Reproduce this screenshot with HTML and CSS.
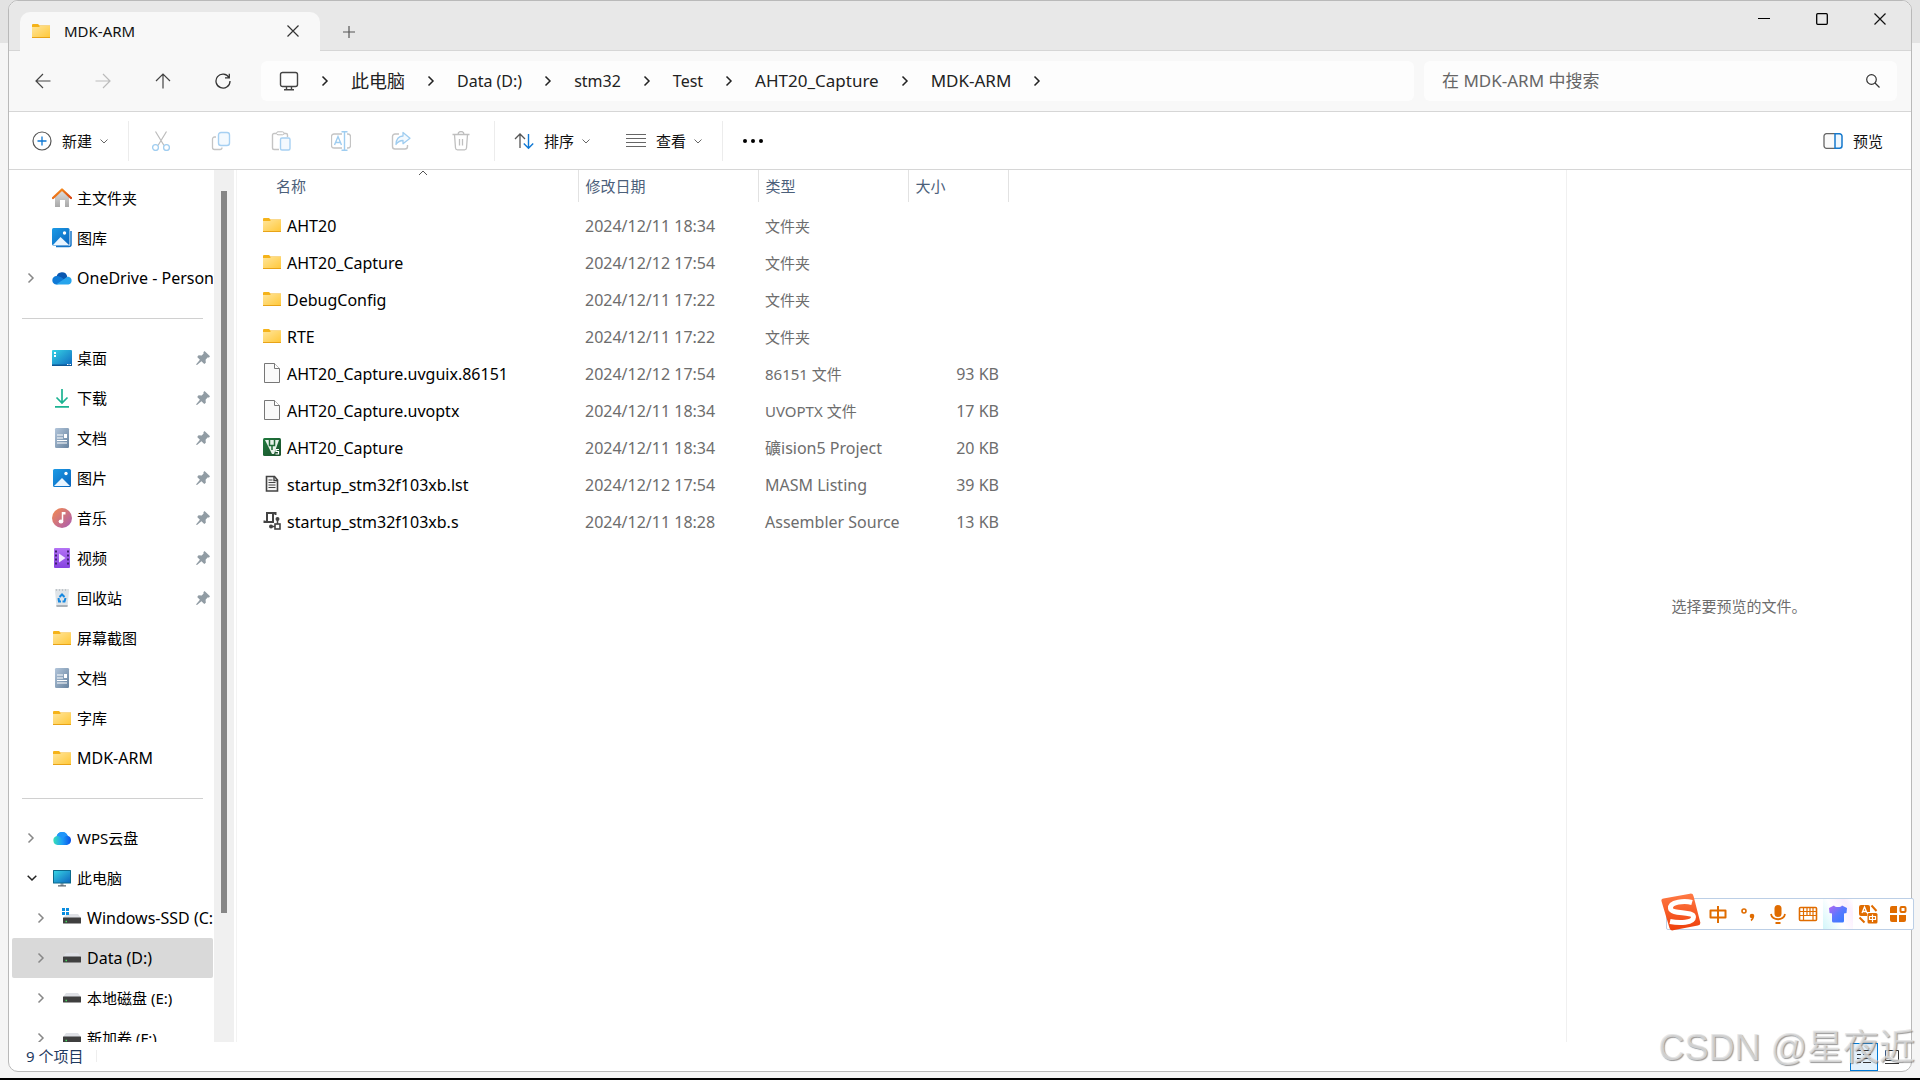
FILE: index.html
```html
<!DOCTYPE html>
<html lang="zh-CN">
<head>
<meta charset="utf-8">
<title>MDK-ARM</title>
<link rel="stylesheet" href="styles.css">
</head>
<body>
<svg class="sprite" width="0" height="0" aria-hidden="true">
  <defs>
    <linearGradient id="g-folder" x1="0" y1="0" x2="1" y2="1"><stop offset="0" stop-color="#ffe59a"/><stop offset="1" stop-color="#ffc83a"/></linearGradient>
    <linearGradient id="g-blue" x1="0" y1="0" x2="1" y2="1"><stop offset="0" stop-color="#1c9be6"/><stop offset="1" stop-color="#0a64bd"/></linearGradient>
    <linearGradient id="g-desk" x1="0" y1="0" x2="1" y2="1"><stop offset="0" stop-color="#36d3e4"/><stop offset="1" stop-color="#0f68c0"/></linearGradient>
    <linearGradient id="g-home" x1="0" y1="0" x2="0" y2="1"><stop offset="0" stop-color="#e0e0e0"/><stop offset="1" stop-color="#a8a8a8"/></linearGradient>
    <linearGradient id="g-roof" x1="0" y1="0" x2="1" y2="1"><stop offset="0" stop-color="#fb9a22"/><stop offset="1" stop-color="#d8430f"/></linearGradient>
    <linearGradient id="g-doc" x1="0" y1="0" x2="1" y2="1"><stop offset="0" stop-color="#b2c5da"/><stop offset="1" stop-color="#67839f"/></linearGradient>
    <linearGradient id="g-down" x1="0" y1="0" x2="1" y2="1"><stop offset="0" stop-color="#2fc98c"/><stop offset="1" stop-color="#0c9c9c"/></linearGradient>
    <linearGradient id="g-music" x1="0" y1="0" x2="1" y2="1"><stop offset="0" stop-color="#f58b4c"/><stop offset="1" stop-color="#a85bb5"/></linearGradient>
    <linearGradient id="g-video" x1="0" y1="0" x2="0" y2="1"><stop offset="0" stop-color="#b474f5"/><stop offset="1" stop-color="#8541e0"/></linearGradient>
    <linearGradient id="g-wps" x1="0" y1="0" x2="1" y2="0"><stop offset="0" stop-color="#36e0b8"/><stop offset=".5" stop-color="#1ea0f5"/><stop offset="1" stop-color="#0a50e8"/></linearGradient>
    <linearGradient id="g-sogou" x1="0" y1="0" x2="0" y2="1"><stop offset="0" stop-color="#ff7a45"/><stop offset="1" stop-color="#ee3f0a"/></linearGradient>
    <linearGradient id="g-shirt" x1="0" y1="0" x2="1" y2="1"><stop offset="0" stop-color="#b565f2"/><stop offset=".5" stop-color="#5a78ff"/><stop offset="1" stop-color="#2f79ff"/></linearGradient>
    <linearGradient id="g-keil" x1="0" y1="0" x2="1" y2="1"><stop offset="0" stop-color="#1f7a3d"/><stop offset="1" stop-color="#1b4f2c"/></linearGradient>
  </defs>
  <symbol id="folder" viewBox="0 0 18 18"><path d="M0 3a1 1 0 0 1 1-1h5l1.500 1.500H18V9H0z" fill="#f5b31a"/><path d="M0 5h7l1-1h10v11.500H0z" fill="url(#g-folder)"/><path d="M0 15h18v1H0z" fill="#e8a317"/></symbol>
  <symbol id="home" viewBox="0 0 20 20"><path d="M3 9l7-7 7 7v10h-4v-7H8v7H3z" fill="url(#g-home)"/><path d="M1 10l9-8.500 9 8.500" fill="none" stroke="url(#g-roof)" stroke-width="2.400" stroke-linecap="round" stroke-linejoin="round"/></symbol>
  <symbol id="gallery" viewBox="0 0 20 20"><path d="M4 18.500h13a2 2 0 0 0 2-2V3" fill="none" stroke="#1474c8" stroke-width="1.500"/><rect width="17.500" height="17.500" rx="1.500" fill="url(#g-blue)"/><path d="M1 17l7.500-8L17 17z" fill="#eaf5ff"/><circle cx="12.500" cy="5" r="1.700" fill="#fff"/></symbol>
  <symbol id="picture" viewBox="0 0 20 20"><rect x="1" y="1" width="18" height="18" rx="1.500" fill="url(#g-blue)"/><path d="M2 18l8-8 8 8z" fill="#eaf5ff"/><circle cx="14" cy="5.500" r="1.700" fill="#fff"/></symbol>
  <symbol id="onedrive" viewBox="0 0 20 20"><path d="M4.500 9a5.500 5.500 0 0 1 10.800-.5L13 13z" fill="#0a57b0"/><path d="M4.500 16.500A4.200 4.200 0 0 1 4.600 8c2-.3 4 .8 6 2.200l5 4z" fill="#0f7ad6"/><path d="M4 16.500l7.500-5c3-2 4-3 5.500-2.500a3.900 3.900 0 0 1-.5 7.500z" fill="#27a4ec"/></symbol>
  <symbol id="desktop" viewBox="0 0 20 20"><rect y="2" width="20" height="16" rx="1" fill="url(#g-desk)"/><path d="M2 4h2v2H2zM2 7h2v2H2z" fill="#fff"/><path d="M0 16.500h20V18H0z" fill="#0d5796"/><path d="M15 16.500h1.500M17.500 16.500H19" stroke="#fff"/></symbol>
  <symbol id="download" viewBox="0 0 20 20"><path d="M10 1v14M4.500 9.500L10 15l5.500-5.500M3 18.800h14" fill="none" stroke="#1cb392" stroke-width="1.700"/></symbol>
  <symbol id="document" viewBox="0 0 20 20"><rect x="3" width="14" height="20" rx="1.200" fill="url(#g-doc)"/><path d="M5 7h6M5 10h6M5 12.500h10M5 15h10" stroke="#fff" stroke-width="1.200"/><path d="M12 6h3v4h-3z" fill="#fff"/></symbol>
  <symbol id="music" viewBox="0 0 20 20"><circle cx="10" cy="10" r="10" fill="url(#g-music)"/><path d="M10.500 4v9" stroke="#fff" stroke-width="1.500"/><path d="M10 4h3.500v2.500H10z" fill="#fff"/><ellipse cx="9" cy="13.500" rx="2.400" ry="2" fill="#fff"/></symbol>
  <symbol id="video" viewBox="0 0 20 20"><rect x="2" width="16" height="20" rx="1" fill="url(#g-video)"/><path d="M4 2.500v16M16 2.500v16" stroke="#3e2070" stroke-width="2" stroke-dasharray="2 2"/><path d="M7 5.500v9l6.500-4.500z" fill="#f3eaff"/></symbol>
  <symbol id="bin" viewBox="0 0 20 20"><path d="M3 3h14l-1.500 16h-11z" fill="#dfe4e8"/><path d="M3.500 2h13" stroke="#a9b1b8" stroke-width="1.500" stroke-dasharray="2 1"/><path d="M4.300 17h11.400l-.3 2H4.600z" fill="#aab2b9"/><path d="M7.500 9L10 6.500 12.500 9M13.500 10l-1 3.500h-2M9 13.500H7L6.500 10" fill="none" stroke="#1688e0" stroke-width="2"/></symbol>
  <symbol id="wps" viewBox="0 0 20 20"><path d="M5.500 17a4.600 4.600 0 0 1-.8-9 5.800 5.800 0 0 1 11-.3A4.800 4.800 0 0 1 15 17z" fill="url(#g-wps)"/><path d="M4.700 8a5.800 5.800 0 0 1 11-.3c-3 0-4.500 2-5.500 4.300A5.500 5.500 0 0 0 4.700 8z" fill="#2196fa"/></symbol>
  <symbol id="pc" viewBox="0 0 20 20"><path d="M8.500 15h3v3h-3z" fill="#9aa5ad"/><path d="M6 17.200h8v1.300H6z" fill="#59646c"/><rect x="1" y="2" width="18" height="13.500" rx=".5" fill="#0c6a8c"/><rect x="2" y="3" width="16" height="11.500" fill="url(#g-desk)"/></symbol>
  <symbol id="drive" viewBox="0 0 18 18"><path d="M3 4h12l3 4H0z" fill="#dfe1e6"/><rect y="7.500" width="18" height="6" rx=".5" fill="#3f3f3f"/><path d="M2.500 11.500H4" stroke="#47e05f" stroke-width="1.500"/></symbol>
  <symbol id="windrive" viewBox="0 0 20 20"><path d="M5 6h11l3 4H1z" fill="#dfe1e6"/><rect x="1" y="9.500" width="18" height="6" rx=".5" fill="#3f3f3f"/><path d="M3.500 13.500H5" stroke="#47e05f" stroke-width="1.500"/><path d="M0 0h3v3H0zM4 0h3v3H4zM0 4h3v3H0zM4 4h3v3H4z" fill="#0a8de0"/></symbol>
  <symbol id="file" viewBox="0 0 18 20"><path d="M1.500.5h10l5 5v14h-15z" fill="#fafafa" stroke="#777"/><path d="M11.500.5v5h5" fill="#fff" stroke="#777"/></symbol>
  <symbol id="keil" viewBox="0 0 18 20"><rect y="1" width="18" height="18" rx="1.500" fill="url(#g-keil)"/><path d="M2 3h14l-5 14H9z" fill="#e8f2ea"/><path d="M6.500 3v5.500h5V3M9 9v4" fill="none" stroke="#1f6a37" stroke-width="1.500"/><path d="M16 12.500h-3v2h2.500V17H12.500" fill="none" stroke="#fff" stroke-width="1.200"/></symbol>
  <symbol id="listing" viewBox="0 0 18 20"><path d="M3.500 2.500h8l3 3.500v11h-11z" fill="#f6f6f6" stroke="#444" stroke-width="1.600"/><path d="M11 2v4.500h4" fill="none" stroke="#444" stroke-width="1.400"/><path d="M5.500 6h4M5.500 8.500h7M5.500 11h7M5.500 13.500h7" stroke="#444" stroke-width="1.200"/></symbol>
  <symbol id="asm" viewBox="0 0 18 20"><path d="M4 10V2h8.500v2M10 2.500V11H1.500V9.500" fill="none" stroke="#444" stroke-width="2"/><circle cx="14.500" cy="8" r="2" fill="#444"/><circle cx="8" cy="15.500" r="2" fill="#444"/><path d="M14.500 8v5M8 15.500h4" stroke="#444" stroke-width="1.500"/><rect x="12" y="13" width="5" height="5" fill="#fff" stroke="#444" stroke-width="1.600"/></symbol>
  <symbol id="pin" viewBox="0 0 14 14"><path d="M8.500 0L14 5.200 13 6.600l-1.500 0L9.600 8.700l.2 3L8.300 13 5.400 10.200 1 14l-1-.5L3.900 8.800 1.200 5.900l1.400-1.600 3.100.2 1.900-2-.2-1.200z" fill="#919ca4"/></symbol>
  <symbol id="right" viewBox="0 0 8 12"><path d="M1.500 1.500L6 6l-4.500 4.500" fill="none" stroke="currentColor" stroke-width="1.500"/></symbol>
  <symbol id="down" viewBox="0 0 8 8"><path d="M.5 2.500L4 6l3.500-3.500" fill="none" stroke="#666"/></symbol>
  <symbol id="close" viewBox="0 0 12 12"><path d="M.5.5l11 11M11.500.5l-11 11" stroke="currentColor" stroke-width="1.200"/></symbol>
</svg>

<div class="desktop">
  <main class="window">
    <header class="tabs">
      <div class="tab">
        <svg class="i18"><use href="#folder"/></svg>
        <span class="tab-title">MDK-ARM</span>
        <button class="tab-close" aria-label="关闭标签页"><svg class="i12"><use href="#close"/></svg></button>
      </div>
      <button class="tab-new" aria-label="新建标签页"><svg class="i12" viewBox="0 0 12 12"><path d="M6 0v12M0 6h12" stroke="#555" stroke-width="1.200"/></svg></button>
      <div class="caption">
        <button aria-label="最小化"><svg class="i12" viewBox="0 0 12 12"><path d="M0 5.500h12" stroke="#000"/></svg></button>
        <button aria-label="最大化"><svg class="i12" viewBox="0 0 12 12"><rect x=".7" y=".7" width="10.600" height="10.600" rx="1" fill="none" stroke="#000" stroke-width="1.300"/></svg></button>
        <button aria-label="关闭"><svg class="i12"><use href="#close"/></svg></button>
      </div>
    </header>

    <nav class="address" aria-label="地址栏">
      <div class="history">
        <button aria-label="后退"><svg class="i16" viewBox="0 0 16 16"><path d="M15.500 8H1M8 1L1 8l7 7" fill="none" stroke="#444" stroke-width="1.200"/></svg></button>
        <button aria-label="前进" disabled><svg class="i16" viewBox="0 0 16 16"><path d="M.5 8H15M8 1l7 7-7 7" fill="none" stroke="#bbb" stroke-width="1.200"/></svg></button>
        <button aria-label="上移"><svg class="i16" viewBox="0 0 16 16"><path d="M8 15.500V1M1 8l7-7 7 7" fill="none" stroke="#444" stroke-width="1.200"/></svg></button>
        <button aria-label="刷新"><svg class="i16" viewBox="0 0 16 16"><path d="M14 4.500A7 7 0 1 0 15 8M14.300.8v4H10" fill="none" stroke="#333" stroke-width="1.300"/></svg></button>
      </div>
      <div class="crumbs">
        <svg class="i20" viewBox="0 0 20 20"><rect x="1.500" y="1.500" width="17" height="14" rx="2" fill="none" stroke="#444" stroke-width="1.400"/><path d="M7.500 16v2.500M12.500 16v2.500M5 18.800h10" stroke="#444" stroke-width="1.400"/></svg>
        <svg class="chev"><use href="#right"/></svg>
        <button class="zh-large">此电脑</button>
        <svg class="chev"><use href="#right"/></svg>
        <button>Data (D:)</button>
        <svg class="chev"><use href="#right"/></svg>
        <button>stm32</button>
        <svg class="chev"><use href="#right"/></svg>
        <button>Test</button>
        <svg class="chev"><use href="#right"/></svg>
        <button class="caps">AHT20_Capture</button>
        <svg class="chev"><use href="#right"/></svg>
        <button class="caps">MDK-ARM</button>
        <svg class="chev"><use href="#right"/></svg>
      </div>
      <label class="search">
        <input type="text" placeholder="在 MDK-ARM 中搜索" aria-label="在 MDK-ARM 中搜索">
        <svg class="i14" viewBox="0 0 14 14"><circle cx="5.500" cy="5.500" r="4.800" fill="none" stroke="#333" stroke-width="1.200"/><path d="M9 9l4.500 4.500" stroke="#333" stroke-width="1.300"/></svg>
      </label>
    </nav>

    <div class="toolbar">
      <button class="tool new"><svg class="i20" viewBox="0 0 20 20"><circle cx="10" cy="10" r="9" fill="none" stroke="#555" stroke-width="1.200"/><path d="M10 5.500v9M5.500 10h9" stroke="#0f78d4" stroke-width="1.300"/></svg><span>新建</span><svg class="i8"><use href="#down"/></svg></button>
      <div class="actions">
        <button disabled aria-label="剪切"><svg class="i20" viewBox="0 0 20 20"><path d="M4.500.5L13 14.500M15.500.5L7 14.500" stroke="#bcbcbc" stroke-width="1.200"/><g fill="none" stroke="#9fcdf0" stroke-width="1.300"><circle cx="4.500" cy="16.500" r="2.900"/><circle cx="15.500" cy="16.500" r="2.900"/></g></svg></button>
        <button disabled aria-label="复制"><svg class="i20" viewBox="0 0 20 20"><path d="M5 6H3.500a2 2 0 0 0-2 2v8.500a2 2 0 0 0 2 2H9a2 2 0 0 0 2-2" fill="none" stroke="#c4c4c4" stroke-width="1.300"/><rect x="7.500" y="1.500" width="11" height="13" rx="2.500" fill="#f3f9fe" stroke="#a6d0f2" stroke-width="1.400"/></svg></button>
        <button disabled aria-label="粘贴"><svg class="i20" viewBox="0 0 20 20"><path d="M5 2.500H3a1.500 1.500 0 0 0-1.500 1.500v13A1.500 1.500 0 0 0 3 18.500h5M13 2.500h2A1.500 1.500 0 0 1 16.500 4v2" fill="none" stroke="#c4c4c4" stroke-width="1.400"/><rect x="5.500" y=".8" width="7.500" height="3" rx="1.500" fill="#fff" stroke="#bbb"/><rect x="9.500" y="7" width="9.500" height="12" rx="1.500" fill="#f3f9fe" stroke="#a6d0f2" stroke-width="1.400"/></svg></button>
        <button disabled aria-label="重命名"><svg class="i20" viewBox="0 0 20 20"><path d="M11 3H3a2.500 2.500 0 0 0-2.500 2.500v9A2.500 2.500 0 0 0 3 17h8M16 3h1a2.500 2.500 0 0 1 2.500 2.500v9A2.500 2.500 0 0 1 17 17h-1" fill="none" stroke="#c4c4c4" stroke-width="1.300"/><path d="M3.500 14L7 5.500l3.500 8.500M5 11.500h4M13.500 1v18M10.500.7h6M10.500 19.300h6" fill="none" stroke="#9fcdf0" stroke-width="1.400"/></svg></button>
        <button disabled aria-label="共享"><svg class="i20" viewBox="0 0 20 20"><path d="M8 3H4a2.500 2.500 0 0 0-2.500 2.500v10A2.500 2.500 0 0 0 4 18h10a2.500 2.500 0 0 0 2.500-2.500V14" fill="none" stroke="#c4c4c4" stroke-width="1.400"/><path d="M12 1.500l7 5.700-7 5.500V9.500c-3 0-5 1-7 4 .2-5 2.500-8.300 7-8.500z" fill="#f3f9fe" stroke="#9fcdf0" stroke-width="1.300" stroke-linejoin="round"/></svg></button>
        <button disabled aria-label="删除"><svg class="i20" viewBox="0 0 20 20"><path d="M1.500 3.500h17M7 3.500a3 3 0 0 1 6 0M3.500 3.500l1 13.500a2 2 0 0 0 2 1.800h7a2 2 0 0 0 2-1.800l1-13.500M8.500 8v6.500M11.500 8v6.500" fill="none" stroke="#bfbfbf" stroke-width="1.300"/></svg></button>
      </div>
      <button class="tool sort"><svg class="i20" viewBox="0 0 20 20"><path d="M6 17V3M1 8l5-5 5 5" fill="none" stroke="#555" stroke-width="1.300"/><path d="M14.500 3v14M9.800 12.500l4.700 4.700 4.700-4.700" fill="none" stroke="#0f78d4" stroke-width="1.400"/></svg><span>排序</span><svg class="i8"><use href="#down"/></svg></button>
      <button class="tool view"><svg class="i20" viewBox="0 0 20 20"><path d="M0 3.500h20M0 7.500h20M0 11.500h20M0 15.500h20" stroke="#666"/></svg><span>查看</span><svg class="i8"><use href="#down"/></svg></button>
      <button class="tool more" aria-label="更多"><svg class="i20" viewBox="0 0 20 20"><circle cx="2" cy="10" r="2"/><circle cx="10" cy="10" r="2"/><circle cx="18" cy="10" r="2"/></svg></button>
      <button class="tool preview-toggle"><svg class="i20" viewBox="0 0 20 20"><path d="M12 2.700H3.500A2.500 2.500 0 0 0 1 5.200v9.600a2.500 2.500 0 0 0 2.500 2.500H12" fill="#fafafa" stroke="#666" stroke-width="1.300"/><path d="M12 2.700h4.500A2.500 2.500 0 0 1 19 5.200v9.600a2.500 2.500 0 0 1-2.500 2.500H12z" fill="#eef7fe" stroke="#1478cc" stroke-width="1.500"/></svg><span>预览</span></button>
    </div>

    <div class="content">
      <nav class="sidebar" aria-label="导航窗格">
        <a href="#" class="row"><i></i><svg class="i20"><use href="#home"/></svg><span>主文件夹</span></a>
        <a href="#" class="row"><i></i><svg class="i20"><use href="#gallery"/></svg><span>图库</span></a>
        <a href="#" class="row latin"><i><svg class="chev"><use href="#right"/></svg></i><svg class="i20"><use href="#onedrive"/></svg><span>OneDrive - Personal</span></a>
        <hr>
        <a href="#" class="row"><i></i><svg class="i20"><use href="#desktop"/></svg><span>桌面</span><svg class="pin"><use href="#pin"/></svg></a>
        <a href="#" class="row"><i></i><svg class="i20"><use href="#download"/></svg><span>下载</span><svg class="pin"><use href="#pin"/></svg></a>
        <a href="#" class="row"><i></i><svg class="i20"><use href="#document"/></svg><span>文档</span><svg class="pin"><use href="#pin"/></svg></a>
        <a href="#" class="row"><i></i><svg class="i20"><use href="#picture"/></svg><span>图片</span><svg class="pin"><use href="#pin"/></svg></a>
        <a href="#" class="row"><i></i><svg class="i20"><use href="#music"/></svg><span>音乐</span><svg class="pin"><use href="#pin"/></svg></a>
        <a href="#" class="row"><i></i><svg class="i20"><use href="#video"/></svg><span>视频</span><svg class="pin"><use href="#pin"/></svg></a>
        <a href="#" class="row"><i></i><svg class="i20"><use href="#bin"/></svg><span>回收站</span><svg class="pin"><use href="#pin"/></svg></a>
        <a href="#" class="row"><i></i><svg class="i20 inset"><use href="#folder"/></svg><span>屏幕截图</span></a>
        <a href="#" class="row"><i></i><svg class="i20"><use href="#document"/></svg><span>文档</span></a>
        <a href="#" class="row"><i></i><svg class="i20 inset"><use href="#folder"/></svg><span>字库</span></a>
        <a href="#" class="row latin"><i></i><svg class="i20 inset"><use href="#folder"/></svg><span>MDK-ARM</span></a>
        <hr>
        <a href="#" class="row"><i><svg class="chev"><use href="#right"/></svg></i><svg class="i20"><use href="#wps"/></svg><span>WPS云盘</span></a>
        <a href="#" class="row"><i><svg class="open" viewBox="0 0 10 8"><path d="M.7 1.700L5 6l4.300-4.300" fill="none" stroke="#222" stroke-width="1.500"/></svg></i><svg class="i20"><use href="#pc"/></svg><span>此电脑</span></a>
        <a href="#" class="row child latin"><i><svg class="chev"><use href="#right"/></svg></i><svg class="i20"><use href="#windrive"/></svg><span>Windows-SSD (C:)</span></a>
        <a href="#" class="row child latin selected"><i><svg class="chev"><use href="#right"/></svg></i><svg class="i20 inset"><use href="#drive"/></svg><span>Data (D:)</span></a>
        <a href="#" class="row child"><i><svg class="chev"><use href="#right"/></svg></i><svg class="i20 inset"><use href="#drive"/></svg><span>本地磁盘 (E:)</span></a>
        <a href="#" class="row child"><i><svg class="chev"><use href="#right"/></svg></i><svg class="i20 inset"><use href="#drive"/></svg><span>新加卷 (F:)</span></a>
      </nav>
      <div class="scrollbar"><div class="thumb"></div></div>

      <section class="files">
        <table>
          <colgroup><col class="c-name"><col class="c-date"><col class="c-type"><col class="c-size"></colgroup>
          <thead><tr><th class="sorted">名称<svg class="caret" viewBox="0 0 10 6"><path d="M1 5l4-4 4 4" fill="none" stroke="#555"/></svg></th><th>修改日期</th><th>类型</th><th>大小</th></tr></thead>
          <tbody>
            <tr><td><svg><use href="#folder"/></svg>AHT20</td><td>2024/12/11 18:34</td><td class="zh">文件夹</td><td></td></tr>
            <tr><td><svg><use href="#folder"/></svg>AHT20_Capture</td><td>2024/12/12 17:54</td><td class="zh">文件夹</td><td></td></tr>
            <tr><td><svg><use href="#folder"/></svg>DebugConfig</td><td>2024/12/11 17:22</td><td class="zh">文件夹</td><td></td></tr>
            <tr><td><svg><use href="#folder"/></svg>RTE</td><td>2024/12/11 17:22</td><td class="zh">文件夹</td><td></td></tr>
            <tr><td><svg><use href="#file"/></svg>AHT20_Capture.uvguix.86151</td><td>2024/12/12 17:54</td><td class="zh">86151 文件</td><td>93 KB</td></tr>
            <tr><td><svg><use href="#file"/></svg>AHT20_Capture.uvoptx</td><td>2024/12/11 18:34</td><td class="zh">UVOPTX 文件</td><td>17 KB</td></tr>
            <tr><td><svg><use href="#keil"/></svg>AHT20_Capture</td><td>2024/12/11 18:34</td><td>礦ision5 Project</td><td>20 KB</td></tr>
            <tr><td><svg><use href="#listing"/></svg>startup_stm32f103xb.lst</td><td>2024/12/12 17:54</td><td>MASM Listing</td><td>39 KB</td></tr>
            <tr><td><svg><use href="#asm"/></svg>startup_stm32f103xb.s</td><td>2024/12/11 18:28</td><td>Assembler Source</td><td>13 KB</td></tr>
          </tbody>
        </table>
      </section>

      <aside class="preview">选择要预览的文件。</aside>
    </div>

    <footer class="status">
      <span class="count">9 个项目</span>
      <button class="mode active" aria-label="详细信息"><svg viewBox="0 0 16 16"><path d="M1 1.500h4M7 1.500h8M1 5.500h4M7 5.500h8M1 9.500h4M7 9.500h8M1 13.500h4M7 13.500h8" stroke="#333"/></svg></button>
      <button class="mode" aria-label="大图标"><svg viewBox="0 0 16 16"><path d="M1.500 1.500h13v10h-13zM1 14.500h14" fill="none" stroke="#333"/></svg></button>
    </footer>
  </main>

  <div class="ime">
    <svg class="ime-logo" viewBox="0 0 40 38"><path d="M2.500 5.500L29 .7a3 3 0 0 1 3.500 2.200l6.700 26a3 3 0 0 1-2.400 3.700L12 37.300a3 3 0 0 1-3.500-2.200L.6 8.500a2.300 2.300 0 0 1 1.900-3z" fill="url(#g-sogou)"/><path d="M31 9.500C24 7.500 8.500 8.500 9.500 15.500c.8 6 23 2.500 23 8.500 0 6-14 6.500-23.500 4.500" fill="none" stroke="#fff" stroke-width="5"/></svg>
    <button aria-label="中文"><svg viewBox="0 0 20 20"><path d="M10 2v17M2.500 6.500h15v7h-15z" fill="none" stroke="currentColor" stroke-width="2" stroke-linejoin="round"/></svg></button>
    <button aria-label="标点"><svg viewBox="0 0 20 20"><circle cx="6" cy="7" r="2" fill="none" stroke="currentColor" stroke-width="1.600"/><circle cx="14" cy="12" r="2.300" fill="currentColor"/><path d="M15.300 12c0 2-.8 3.500-2.300 4.500" fill="none" stroke="currentColor" stroke-width="1.600"/></svg></button>
    <button aria-label="语音"><svg viewBox="0 0 20 20"><rect x="6.500" y="1" width="7" height="12" rx="3.500" fill="currentColor"/><path d="M3 10c1 7 13 7 14 0M7.500 19h5" fill="none" stroke="currentColor" stroke-width="1.800"/></svg></button>
    <button aria-label="键盘"><svg viewBox="0 0 20 20"><rect x="1.500" y="3.500" width="17" height="13" rx="1" fill="none" stroke="currentColor" stroke-width="1.600"/><path d="M2 7.500h16M2 11.500h16M5.500 4v12M9 4v8M12 4v8M15 4v12" stroke="currentColor" stroke-width="1.200"/></svg></button>
    <button class="skin" aria-label="皮肤"><svg viewBox="0 0 20 20"><path d="M1 4l5-2.500c1 2 7 2 8 0L19 4l-.5 5-2.500.5V17a1.500 1.500 0 0 1-1.500 1.500h-9A1.500 1.500 0 0 1 4 17V9.500L1.500 9z" fill="url(#g-shirt)"/></svg></button>
    <button aria-label="翻译"><svg viewBox="0 0 20 20"><path d="M3 1h7a2 2 0 0 1 2 2v5H9v4H3a2 2 0 0 1-2-2V3a2 2 0 0 1 2-2z" fill="currentColor"/><path d="M4 9l2.500-6L9 9M5 7.500h3" fill="none" stroke="#fff" stroke-width="1.300"/><path d="M13.500 1.500L18.500 7M1.500 13.500l5 5" stroke="currentColor" stroke-width="2"/><rect x="9.500" y="9" width="10" height="10.500" rx="1.500" fill="currentColor"/><path d="M14.500 10.500v7.500M11.500 12.500h6v3h-6z" fill="none" stroke="#fff" stroke-width="1.200"/></svg></button>
    <button aria-label="工具箱"><svg viewBox="0 0 20 20"><path d="M4 2h5v7H2V4a2 2 0 0 1 2-2zM2 11h7v7H4a2 2 0 0 1-2-2zM11 11h7v5a2 2 0 0 1-2 2h-5z" fill="currentColor"/><rect x="12.500" y="3" width="5" height="5" rx="1" fill="none" stroke="currentColor" stroke-width="2"/></svg></button>
  </div>
  <div class="watermark">CSDN @星夜近</div>
</div>
</body>
</html>
```
FILE: styles.css
```css
* { box-sizing: border-box; }

body {
  margin: 0;
  font: 16px/20px "Noto Sans", "Noto Sans CJK SC", sans-serif;
  color: #111;
}

button, input {
  font: inherit;
  color: inherit;
  background: none;
  border: 0;
  padding: 0;
}

button {
  display: flex;
  align-items: center;
  justify-content: center;
  white-space: nowrap;
}

svg { display: block; flex: none; }
.sprite { position: absolute; }
.i8 { width: 8px; height: 8px; }
.i12 { width: 12px; height: 12px; }
.i14 { width: 14px; height: 14px; }
.i16 { width: 16px; height: 16px; }
.i18 { width: 18px; height: 18px; }
.i20 { width: 20px; height: 20px; }
.inset { padding: 1px; }
.chev { width: 8px; height: 12px; }
.open { width: 10px; height: 8px; }
.pin { width: 14px; height: 14px; margin-right: 3px; }
.zh { font-size: 15px; }
.zh-large { font-size: 18px; }
.caps { font-size: 17px; }

.desktop {
  position: relative;
  height: 100vh;
  padding: 0 8px 6px;
  background: linear-gradient(#e3e3e3 43px, #f5f5f5 43px);
  border-bottom: 2px solid #000;
  overflow: hidden;
}

.window {
  display: flex;
  flex-direction: column;
  height: 100%;
  background: #fff;
  border: 1px solid #b9b9b9;
  border-radius: 10px;
  overflow: hidden;
}

/* title bar */
.tabs {
  display: flex;
  flex: none;
  height: 50px;
  padding-left: 11px;
  background: #e8e8e8;
  border-bottom: 1px solid #d6d6d6;
}

.tab {
  display: flex;
  align-items: center;
  width: 300px;
  height: 39px;
  margin-top: 11px;
  padding: 0 14px 2px 12px;
  background: #f8f8f8;
  border-radius: 10px 10px 0 0;
}

.tab-title { flex: 1; margin-left: 14px; font-size: 15px; }
.tab-close { width: 26px; height: 26px; color: #333; }
.tab-new { width: 58px; padding-top: 12px; }
.caption { display: flex; height: 36px; margin-left: auto; padding-right: 2px; }
.caption button { width: 58px; }

/* address row */
.address {
  display: flex;
  flex: none;
  height: 61px;
  padding: 10px 14px 10px 4px;
  background: #f8f8f8;
  border-bottom: 1px solid #d6d6d6;
}

.history { display: flex; width: 248px; }
.history button { width: 60px; }

.crumbs {
  display: flex;
  flex: 1;
  align-items: center;
  gap: 22px;
  padding-left: 18px;
  background: #fdfdfd;
  border-radius: 6px;
  color: #222;
}

.search {
  display: flex;
  align-items: center;
  width: 473px;
  margin-left: 10px;
  padding: 0 17px 0 18px;
  background: #fdfdfd;
  border-radius: 6px;
}

.search input { flex: 1; min-width: 0; font-size: 17px; outline: 0; }
.search input::placeholder { color: #666; opacity: 1; }

/* command bar */
.toolbar {
  display: flex;
  flex: none;
  align-items: center;
  height: 58px;
  padding-top: 1px;
  font-size: 15px;
  border-bottom: 1px solid #d6d6d6;
}

.tool { height: 40px; }
.tool span { margin: 0 8px 0 10px; }
.new { padding: 0 20px 0 23px; }

.actions {
  display: flex;
  height: 40px;
  padding: 0 3px 0 2px;
  border: 1px solid #ececec;
  border-width: 0 1px;
}

.actions button { width: 60px; }
.sort { padding-left: 19px; }
.view { padding: 0 20px 0 36px; border-right: 1px solid #ececec; }
.more { width: 60px; }
.preview-toggle { margin-left: auto; padding-right: 20px; }

/* content */
.content { display: flex; flex: 1; min-height: 0; }

.sidebar {
  width: 204px;
  padding: 8px 0 0 3px;
  overflow: hidden;
  font-size: 15px;
}

.row {
  display: flex;
  align-items: center;
  height: 40px;
  padding-left: 10px;
  color: #000;
  text-decoration: none;
  white-space: nowrap;
  overflow: hidden;
  border-radius: 2px;
}

.row i { flex: none; width: 30px; padding-left: 5px; color: #888; }
.row span { flex: 1 0 auto; margin-left: 5px; }
.row.child { padding-left: 20px; }
.row.latin { font-size: 16px; }
.row.selected { background: #d9d9d9; }

.sidebar hr {
  height: 1px;
  margin: 20px 10px 19px;
  border: 0;
  background: #d0d0d0;
}

.scrollbar { width: 20px; padding: 21px 7px; margin-left: 1px; background: #f0f0f0; }
.thumb { width: 6px; height: 87%; background: #868686; }

.files { flex: 1; margin-left: 2px; border-left: 1px solid #f3f3f3; }

table { border-collapse: collapse; table-layout: fixed; width: 771px; }
.c-name { width: 341px; }
.c-date { width: 180px; }
.c-type { width: 150px; }
.c-size { width: 100px; }

th {
  height: 32px;
  padding: 0 7px;
  text-align: left;
  font-weight: 400;
  font-size: 15px;
  color: #4c607a;
  border-right: 1px solid #e2e2e2;
}

th.sorted { position: relative; padding-left: 39px; }
.caret { position: absolute; top: 0; left: 50%; width: 10px; height: 6px; margin-left: 11px; }

thead::after { content: ""; display: block; height: 5px; }

td {
  height: 37px;
  padding: 0 7px;
  color: #6d6d6d;
  white-space: nowrap;
}

td:first-child { padding-left: 26px; color: #000; }
td:last-child { padding-right: 9px; text-align: right; }
td svg { display: inline-block; width: 18px; height: 20px; margin-right: 6px; vertical-align: -3px; }

.preview {
  display: flex;
  align-items: center;
  justify-content: center;
  width: 345px;
  border-left: 1px solid #f0f0f0;
  font-size: 15px;
  color: #6d6d6d;
}

/* status bar */
.status {
  display: flex;
  flex: none;
  align-items: center;
  height: 29px;
  padding: 0 5px 0 17px;
  font-size: 15px;
  color: #1f3a5f;
}

.count { margin: 0 auto 2px 0; padding-right: 13px; line-height: 12px; border-right: 1px solid #eee; }
.mode { width: 28px; height: 28px; }
.mode svg { width: 16px; height: 16px; }
.mode.active { background: #e3f1fc; border: 1px solid #0078d4; }

/* floating input method bar */
.ime {
  position: absolute;
  right: 6px;
  bottom: 148px;
  display: flex;
  align-items: center;
  height: 32px;
  background: #fff;
  border: 1px solid #bccfe6;
  border-radius: 2px;
  color: #e06c00;
}

.ime-logo { width: 40px; height: 38px; margin: -4px 2px 0 -6px; }
.ime button { width: 30px; height: 30px; }
.ime button svg { width: 20px; height: 20px; }
.ime .skin { background: linear-gradient(60deg, #d2f6fa, #fff 45%, #fbeefe 80%, #fff); }

.watermark {
  position: absolute;
  right: 5px;
  bottom: 8px;
  font: 36px/44px "Liberation Sans", "Noto Sans CJK SC", sans-serif;
  color: rgba(225, 225, 225, .75);
  text-shadow: 1px 1px 1px rgba(110, 110, 110, .7);
  white-space: nowrap;
}
```
